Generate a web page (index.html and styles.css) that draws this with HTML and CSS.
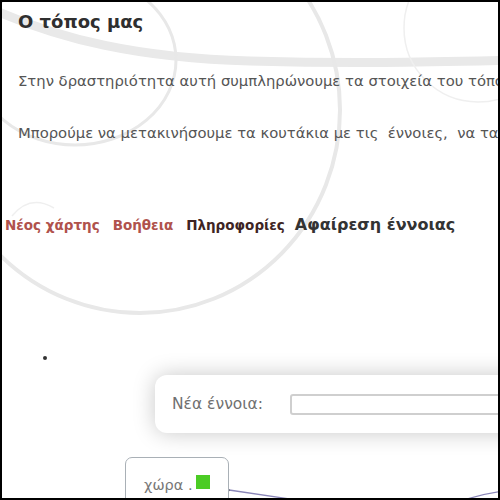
FILE: index.html
```html
<!DOCTYPE html>
<html lang="el">
<head>
<meta charset="utf-8">
<title>Ο τόπος μας</title>
<link rel="stylesheet" href="styles.css">
</head>
<body>
<div class="frame">
  <!-- decorative swirls behind the page content -->
  <svg class="swirls" width="500" height="500" viewBox="0 0 500 500" aria-hidden="true">
    <path class="band" d="M -10 8 C 60 40, 140 58, 250 61 S 430 62, 520 60"/>
    <ellipse class="ring" cx="75" cy="60" rx="101" ry="85"/>
    <ellipse class="ring wide" cx="140" cy="110" rx="200" ry="203"/>
    <path class="ring faint" d="M 12 216 Q 30 194 54 208"/>
    <circle class="ring faint" cx="478" cy="28" r="74"/>
  </svg>

  <header class="intro">
    <h1 class="title">Ο τόπος μας</h1>
    <p class="lead">Στην δραστηριότητα αυτή συμπληρώνουμε τα στοιχεία του τόπου μας.</p>
    <p class="lead">Μπορούμε να μετακινήσουμε τα κουτάκια με τις &nbsp;έννοιες, &nbsp;να τα συνδέσουμε.</p>
  </header>

  <nav class="menu">
    <a class="menu-item warm">Νέος χάρτης</a>
    <a class="menu-item warm">Βοήθεια</a>
    <a class="menu-item dark">Πληροφορίες</a>
    <a class="menu-item plain">Αφαίρεση έννοιας</a>
  </nav>

  <section class="board">
    <span class="pin"></span>
    <svg class="links" width="500" height="200" viewBox="0 0 500 200" aria-hidden="true">
      <path class="link" d="M 229 190 L 310 202"/>
      <path class="link" d="M 455 203 Q 480 194 505 191"/>
      <circle class="joint" cx="228" cy="190" r="1.6"/>
    </svg>
    <div class="add-panel">
      <label class="add-label" for="concept">Νέα έννοια:</label>
      <input class="add-input" id="concept" type="text">
    </div>
    <div class="node">
      <span class="node-text">χώρα .</span><span class="node-swatch"></span>
    </div>
  </section>
</div>
</body>
</html>
```
FILE: styles.css
```css
html, body {
  margin: 0;
  padding: 0;
  background: #fff;
}

.frame {
  position: relative;
  width: 500px;
  height: 500px;
  box-sizing: border-box;
  border: 2px solid #000;
  overflow: hidden;
  background: #fff;
  font-family: "DejaVu Sans", Verdana, sans-serif;
}

.swirls {
  position: absolute;
  left: -2px;
  top: -2px;
  fill: none;
}

.swirls .band {
  stroke: #e9e9e9;
  stroke-width: 9;
  stroke-linecap: round;
}

.swirls .ring {
  stroke: #e8e8e8;
  stroke-width: 3;
  fill: none;
}

.swirls .ring.wide {
  stroke-width: 4;
}

.swirls .ring.faint {
  stroke: #efefef;
  stroke-width: 1.5;
}

.intro {
  position: relative;
  padding: 8px 0 0 16px;
  white-space: nowrap;
}

.title {
  margin: 0;
  font-size: 18px;
  font-weight: bold;
  color: #2f2f2f;
  line-height: 24px;
}

.lead {
  margin: 0;
  font-size: 14.8px;
  color: #555;
  line-height: 20px;
}

.title + .lead {
  margin-top: 37px;
}

.lead + .lead {
  margin-top: 32px;
}

.menu {
  position: relative;
  display: flex;
  align-items: baseline;
  gap: 13px;
  padding: 73px 0 0 3px;
  white-space: nowrap;
}

.menu-item {
  font-size: 13.5px;
  font-weight: bold;
  line-height: 18px;
  cursor: pointer;
}

.menu-item.warm { color: #b0524c; }
.menu-item.dark { color: #3e2424; }
.menu-item.plain { color: #333; font-size: 16px; margin-left: -3px; }

.board {
  position: absolute;
  left: 0;
  top: 300px;
  width: 500px;
  height: 200px;
}

.links {
  position: absolute;
  left: -2px;
  top: -2px;
  fill: none;
}

.links .link {
  stroke: #8a86b8;
  stroke-width: 1.3;
}

.links .joint {
  fill: #444;
}

.pin {
  position: absolute;
  left: 41px;
  top: 54px;
  width: 4px;
  height: 4px;
  border-radius: 50%;
  background: #333;
}

.add-panel {
  position: absolute;
  left: 153px;
  top: 73px;
  width: 380px;
  height: 58px;
  box-sizing: border-box;
  display: flex;
  align-items: center;
  gap: 27px;
  padding-left: 17px;
  background: #fff;
  border-radius: 12px;
  box-shadow: 0 0 22px rgba(0, 0, 0, 0.22);
}

.add-label {
  font-family: "DejaVu Sans", sans-serif;
  font-size: 15.5px;
  color: #707070;
  white-space: nowrap;
}

.add-input {
  flex: 1;
  height: 21px;
  box-sizing: border-box;
  border: 2px solid #cfcfcf;
  border-radius: 3px;
  background: #fff;
  padding: 0 4px;
}

.node {
  position: absolute;
  left: 123px;
  top: 155px;
  width: 104px;
  height: 60px;
  box-sizing: border-box;
  border: 1.5px solid #a9b0b6;
  border-radius: 7px;
  background: #fff;
  display: flex;
  align-items: flex-start;
  padding: 16px 0 0 18px;
}

.node-text {
  font-family: "DejaVu Sans", sans-serif;
  font-size: 14.5px;
  color: #777;
  line-height: 22px;
}

.node-swatch {
  display: inline-block;
  width: 14px;
  height: 14px;
  margin: 1px 0 0 3px;
  background: #4bcc24;
}
```
